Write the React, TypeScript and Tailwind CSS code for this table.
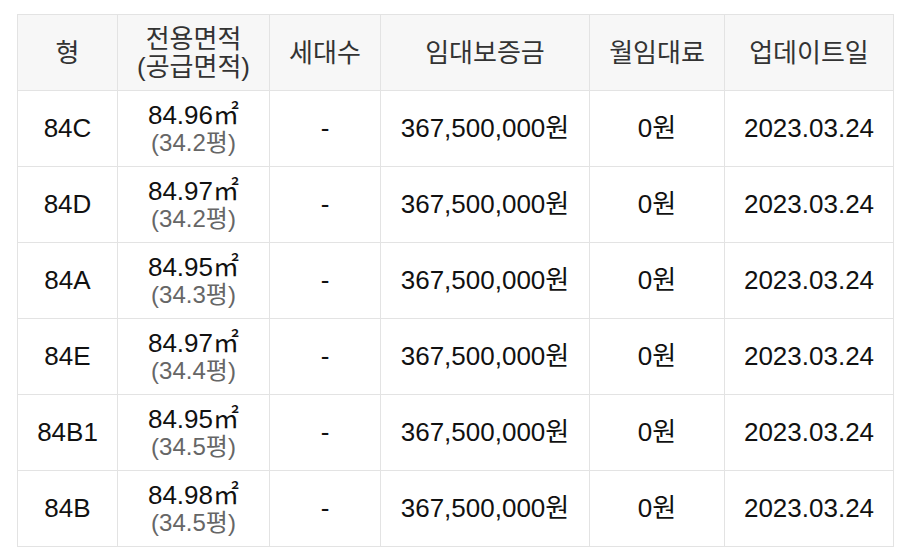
import React from 'react';

interface Row {
  type: string;
  area: string;
  pyeong: string;
}

const rows: Row[] = [
  { type: '84C', area: '84.96', pyeong: '34.2' },
  { type: '84D', area: '84.97', pyeong: '34.2' },
  { type: '84A', area: '84.95', pyeong: '34.3' },
  { type: '84E', area: '84.97', pyeong: '34.4' },
  { type: '84B1', area: '84.95', pyeong: '34.5' },
  { type: '84B', area: '84.98', pyeong: '34.5' },
];

const font = { fontFamily: '"Liberation Sans", "Noto Sans CJK KR", sans-serif' };

const App: React.FC = () => {
  const th = 'border border-[#e3e3e3] font-normal text-[#333] text-[26px] leading-[28px] text-center align-middle p-0';
  const td = 'border border-[#e3e3e3] text-[26px] text-[#111] text-center align-middle';

  return (
    <div className="w-[924px] h-[559px] bg-white pt-[14px] pl-[17px]" style={font}>
      <table className="border-collapse table-fixed w-[876px]">
        <colgroup>
          <col className="w-[100px]" />
          <col className="w-[152px]" />
          <col className="w-[111px]" />
          <col className="w-[209px]" />
          <col className="w-[135px]" />
          <col className="w-[169px]" />
        </colgroup>
        <thead>
          <tr className="h-[76px] bg-[#f7f7f7]">
            <th className={th}>형</th>
            <th className={th}>
              전용면적
              <br />
              (공급면적)
            </th>
            <th className={th}>세대수</th>
            <th className={th}>임대보증금</th>
            <th className={th}>월임대료</th>
            <th className={th}>업데이트일</th>
          </tr>
        </thead>
        <tbody>
          {rows.map((r) => (
            <tr key={r.type} className="h-[76px]">
              <td className={td}>{r.type}</td>
              <td className={`${td} p-0`}>
                <div className="leading-[28px]">{r.area}㎡</div>
                <div className="leading-[28px] text-[24px] text-[#666]">({r.pyeong}평)</div>
              </td>
              <td className={td}>-</td>
              <td className={td}>367,500,000원</td>
              <td className={td}>0원</td>
              <td className={td}>2023.03.24</td>
            </tr>
          ))}
        </tbody>
      </table>
    </div>
  );
};

export default App;
